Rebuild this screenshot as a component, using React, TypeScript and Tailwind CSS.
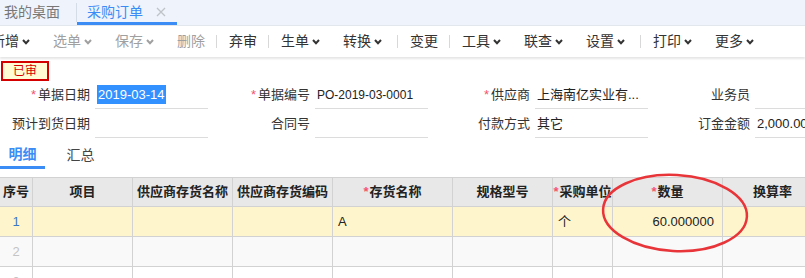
import React from "react";

type Tool = { t: string; chev?: boolean; off?: boolean } | "sep";

const tools: Tool[] = [
  { t: "新增", chev: true },
  { t: "选单", chev: true, off: true },
  { t: "保存", chev: true, off: true },
  { t: "删除", off: true },
  "sep",
  { t: "弃审" },
  "sep",
  { t: "生单", chev: true },
  { t: "转换", chev: true },
  "sep",
  { t: "变更" },
  "sep",
  { t: "工具", chev: true },
  { t: "联查", chev: true },
  { t: "设置", chev: true },
  "sep",
  { t: "打印", chev: true },
  { t: "更多", chev: true },
];

const Chevron = ({ color }: { color: string }) => (
  <span className="flex w-[15px] items-center">
    <svg width="8" height="6" viewBox="0 0 8 6" className="ml-[3px]">
      <polyline points="1,1 4,4.2 7,1" fill="none" stroke={color} strokeWidth="2" />
    </svg>
  </span>
);

const Star = ({ mr = "mr-[2px]" }: { mr?: string }) => (
  <span className={`text-[#f5546c] ${mr}`}>*</span>
);

const Field = ({
  label,
  req,
  children,
}: {
  label: string;
  req?: boolean;
  children?: React.ReactNode;
}) => (
  <div className="flex h-[28px] w-[220px] shrink-0 items-center">
    <div className="w-[90px] shrink-0 text-right text-[13px] text-[#333]">
      {req && <Star />}
      {label}
    </div>
    <div className="ml-[5px] flex h-full w-[113px] shrink-0 items-center overflow-hidden whitespace-nowrap border-b border-[#dcdcdc] pl-[2px] text-[13px] text-[#222]">
      {children}
    </div>
  </div>
);

const cols = [
  { w: "w-[33px]", t: "序号" },
  { w: "w-[100px]", t: "项目" },
  { w: "w-[100px]", t: "供应商存货名称" },
  { w: "w-[100px]", t: "供应商存货编码" },
  { w: "w-[120px]", t: "存货名称", req: true },
  { w: "w-[100px]", t: "规格型号" },
  { w: "w-[60px]", t: "采购单位", req: true },
  { w: "w-[110px]", t: "数量", req: true },
  { w: "w-[100px]", t: "换算率" },
];

export default function App() {
  return (
    <div
      className="relative h-[278px] w-[805px] overflow-hidden bg-white"
      style={{ fontFamily: '"Liberation Sans", "Noto Sans CJK SC", sans-serif' }}
    >
      {/* tab bar */}
      <div className="flex h-[25px] items-stretch bg-[#eef3fc]">
        <div className="flex w-[76px] items-center pl-[4px] text-[14px] text-[#777]">我的桌面</div>
        <div className="my-[3px] w-px bg-[#d6dce6]" />
        <div className="flex w-[100px] items-center border-b-[3px] border-[#3b8cf5] pl-[10px] pt-[2px] text-[14px] text-[#3b8cf5]">
          采购订单
          <svg width="10" height="10" viewBox="0 0 10 10" className="ml-[13px]">
            <path d="M1 1L9 9M9 1L1 9" stroke="#bfc3c9" strokeWidth="1.3" />
          </svg>
        </div>
      </div>

      {/* toolbar */}
      <div className="relative z-10 h-[32px] border-t border-[#e2e7ee] bg-white shadow-[0_2px_2px_rgba(0,0,0,0.10)]">
        <div className="-ml-[17px] flex h-full items-center">
          {tools.map((it, i) =>
            it === "sep" ? (
              <div key={i} className="mr-[4px] h-[13px] w-px shrink-0 bg-[#d8d8d8]" />
            ) : (
              <div
                key={i}
                className={`flex shrink-0 items-center pl-[8px] pr-[11px] text-[14px] ${
                  it.off ? "text-[#a0a0a0]" : "text-[#333]"
                }`}
              >
                {it.t}
                {it.chev && <Chevron color={it.off ? "#a0a0a0" : "#333"} />}
              </div>
            )
          )}
        </div>
      </div>

      {/* status badge */}
      <div className="ml-[1px] mt-[4px] flex h-[20px] w-[48px] items-center justify-center border-2 border-[#d40000] bg-[#fffbd2] text-[12px] text-[#d40000]">
        已审
      </div>

      {/* form */}
      <div className="flex flex-col gap-[1px]">
        <div className="flex">
          <Field label="单据日期" req>
            <span className="bg-[#3390ff] px-[1px] text-white">2019-03-14</span>
          </Field>
          <Field label="单据编号" req>
            <span className="text-[12px]">PO-2019-03-0001</span>
          </Field>
          <Field label="供应商" req>
            上海南亿实业有...
          </Field>
          <Field label="业务员" />
        </div>
        <div className="flex">
          <Field label="预计到货日期" />
          <Field label="合同号" />
          <Field label="付款方式">其它</Field>
          <Field label="订金金额">2,000.00</Field>
        </div>
      </div>

      {/* detail tabs */}
      <div className="mt-[1px] flex h-[30px] items-stretch text-[14px]">
        <div className="flex w-[45px] items-center justify-center border-b-[3px] border-[#3b8cf5] pt-[3px] font-bold text-[#3b8cf5]">
          明细
        </div>
        <div className="ml-[13px] flex w-[45px] items-center justify-center pt-[3px] text-[#444]">
          汇总
        </div>
      </div>

      {/* grid */}
      <div className="mt-[8px] border-t border-[#d2d2d2]">
        <div className="flex h-[29px] border-b border-[#d2d2d2] bg-[#e8e8e8]">
          {cols.map((c) => (
            <div
              key={c.t}
              className={`${c.w} flex shrink-0 items-center justify-center whitespace-nowrap border-r border-[#d2d2d2] text-[13px] font-bold text-[#222]`}
            >
              {c.req && <Star mr="mr-[1px]" />}
              {c.t}
            </div>
          ))}
        </div>
        {[0, 1, 2].map((r) => (
          <div
            key={r}
            className={`flex h-[30px] border-b border-[#d2d2d2] text-[13px] ${
              r === 0 ? "bg-[#fff5cc]" : r === 1 ? "bg-[#f9f9f9]" : "bg-white"
            }`}
          >
            {cols.map((c, ci) => (
              <div
                key={c.t}
                className={`${c.w} flex shrink-0 items-center border-r border-[#d2d2d2] ${
                  ci === 0 ? "justify-center" : ci === 7 ? "justify-end pr-[8px]" : "pl-[5px]"
                } ${ci === 0 ? (r === 0 ? "text-[#3b78c4]" : "text-[#c4c4c4]") : "text-[#222]"}`}
              >
                {ci === 0 && r + 1}
                {r === 0 && ci === 4 && "A"}
                {r === 0 && ci === 6 && "个"}
                {r === 0 && ci === 7 && "60.000000"}
              </div>
            ))}
          </div>
        ))}
      </div>

      {/* annotation ring */}
      <svg
        className="pointer-events-none absolute left-0 top-0"
        width="805"
        height="278"
        viewBox="0 0 805 278"
      >
        <ellipse
          cx="675"
          cy="213"
          rx="72"
          ry="38"
          fill="none"
          stroke="#e8353a"
          strokeWidth="2.5"
          transform="rotate(3 675 213)"
        />
      </svg>
    </div>
  );
}
